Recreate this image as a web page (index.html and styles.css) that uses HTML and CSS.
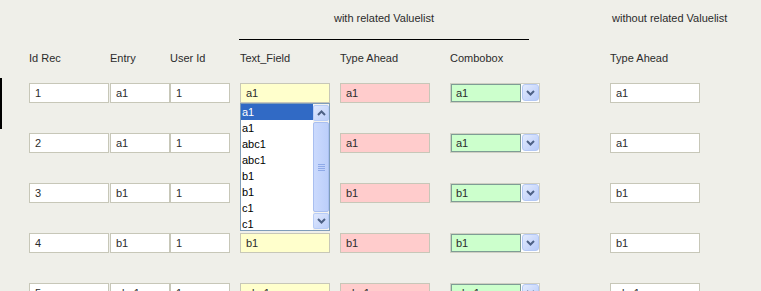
FILE: index.html
```html
<!DOCTYPE html>
<html>
<head>
<meta charset="utf-8">
<link rel="stylesheet" href="styles.css">
</head>
<body>
<div class="page">
  <div class="focus-mark"></div>
  <div class="groups">
    <div class="group group-related">with related Valuelist</div>
    <div class="group group-plain">without related Valuelist</div>
  </div>

  <div class="row labels">
    <div>Id Rec</div>
    <div>Entry</div>
    <div>User Id</div>
    <div>Text_Field</div>
    <div>Type Ahead</div>
    <div>Combobox</div>
    <div>Type Ahead</div>
  </div>

  <div class="row">
    <div class="field w80">1</div>
    <div class="field w60">a1</div>
    <div class="field w60">1</div>
    <div class="cell-rel">
      <div class="field w90 yellow">a1</div>
      <div class="dropdown">
        <div class="items">
          <div class="item selected">a1</div>
          <div class="item">a1</div>
          <div class="item">abc1</div>
          <div class="item">abc1</div>
          <div class="item">b1</div>
          <div class="item">b1</div>
          <div class="item">c1</div>
          <div class="item">c1</div>
        </div>
        <div class="scrollbar">
          <div class="sb-btn"><svg width="9" height="6" viewBox="0 0 9 6"><path d="M1 5 L4.5 1.5 L8 5" fill="none" stroke="#4d6185" stroke-width="2"/></svg></div>
          <div class="sb-track">
            <div class="sb-thumb"><span class="grip"></span><span class="grip"></span><span class="grip"></span><span class="grip"></span></div>
          </div>
          <div class="sb-btn"><svg width="9" height="6" viewBox="0 0 9 6"><path d="M1 1 L4.5 4.5 L8 1" fill="none" stroke="#4d6185" stroke-width="2"/></svg></div>
        </div>
      </div>
    </div>
    <div class="field w90 pink">a1</div>
    <div class="combo"><span class="combo-value">a1</span><span class="combo-btn"><svg width="9" height="6" viewBox="0 0 9 6"><path d="M1 1 L4.5 4.5 L8 1" fill="none" stroke="#4d6185" stroke-width="2"/></svg></span></div>
    <div class="field w90">a1</div>
  </div>

  <div class="row">
    <div class="field w80">2</div>
    <div class="field w60">a1</div>
    <div class="field w60">1</div>
    <div class="field w90 yellow">a1</div>
    <div class="field w90 pink">a1</div>
    <div class="combo"><span class="combo-value">a1</span><span class="combo-btn"><svg width="9" height="6" viewBox="0 0 9 6"><path d="M1 1 L4.5 4.5 L8 1" fill="none" stroke="#4d6185" stroke-width="2"/></svg></span></div>
    <div class="field w90">a1</div>
  </div>

  <div class="row">
    <div class="field w80">3</div>
    <div class="field w60">b1</div>
    <div class="field w60">1</div>
    <div class="field w90 yellow">b1</div>
    <div class="field w90 pink">b1</div>
    <div class="combo"><span class="combo-value">b1</span><span class="combo-btn"><svg width="9" height="6" viewBox="0 0 9 6"><path d="M1 1 L4.5 4.5 L8 1" fill="none" stroke="#4d6185" stroke-width="2"/></svg></span></div>
    <div class="field w90">b1</div>
  </div>

  <div class="row">
    <div class="field w80">4</div>
    <div class="field w60">b1</div>
    <div class="field w60">1</div>
    <div class="field w90 yellow">b1</div>
    <div class="field w90 pink">b1</div>
    <div class="combo"><span class="combo-value">b1</span><span class="combo-btn"><svg width="9" height="6" viewBox="0 0 9 6"><path d="M1 1 L4.5 4.5 L8 1" fill="none" stroke="#4d6185" stroke-width="2"/></svg></span></div>
    <div class="field w90">b1</div>
  </div>

  <div class="row">
    <div class="field w80">5</div>
    <div class="field w60">abc1</div>
    <div class="field w60">1</div>
    <div class="field w90 yellow">abc1</div>
    <div class="field w90 pink">abc1</div>
    <div class="combo"><span class="combo-value">abc1</span><span class="combo-btn"><svg width="9" height="6" viewBox="0 0 9 6"><path d="M1 1 L4.5 4.5 L8 1" fill="none" stroke="#4d6185" stroke-width="2"/></svg></span></div>
    <div class="field w90">abc1</div>
  </div>
</div>
</body>
</html>
```

FILE: styles.css
```css
html, body {
  margin: 0;
  padding: 0;
  background: #efefe9;
  overflow: hidden;
}
.page {
  position: relative;
  font-family: "Liberation Sans", Arial, sans-serif;
  font-size: 11px;
  line-height: 13px;
  color: #2b2b2b;
  width: 761px;
  height: 291px;
  overflow: hidden;
}
.focus-mark {
  position: absolute;
  left: 0;
  top: 78px;
  width: 2px;
  height: 51px;
  background: #000;
}
.groups {
  display: flex;
  padding-left: 239px;
}
.group {
  padding-top: 12px;
  height: 13px;
}
.group-related {
  width: 290px;
  text-align: center;
  padding-bottom: 14px;
  border-bottom: 1px solid #000;
}
.group-plain {
  margin-left: 83px;
}
.row {
  display: grid;
  grid-template-columns: 81px 60px 70px 100px 110px 160px 90px;
  padding-left: 29px;
  height: 20px;
  margin-bottom: 30px;
}
.labels {
  margin-top: 12px;
  height: 13px;
  margin-bottom: 18px;
}
.field {
  box-sizing: border-box;
  height: 20px;
  border: 1px solid #c7c7b8;
  background: #ffffff;
  padding-left: 5px;
  line-height: 18px;
  white-space: nowrap;
  overflow: hidden;
}
.w80 { width: 80px; }
.w60 { width: 60px; }
.w90 { width: 90px; }
.yellow { background: #ffffcc; }
.pink { background: #ffcccc; }
.cell-rel {
  position: relative;
}
.dropdown {
  position: absolute;
  left: 0;
  top: 20px;
  width: 90px;
  height: 128px;
  box-sizing: border-box;
  border: 1px solid #7f9db9;
  background: #ffffff;
  display: flex;
  z-index: 5;
}
.items {
  flex: 1;
  overflow: hidden;
}
.item {
  height: 16px;
  line-height: 16px;
  padding-left: 1px;
  color: #000;
}
.item.selected {
  background: #316ac5;
  color: #ffffff;
}
.scrollbar {
  width: 16px;
  display: flex;
  flex-direction: column;
  background: #f4f3ee;
  padding: 1px 0;
  box-sizing: border-box;
}
.sb-btn {
  height: 16px;
  box-sizing: border-box;
  border: 1px solid #b8cdf7;
  border-radius: 2px;
  background: linear-gradient(135deg, #dfe8fd, #bccffa);
  display: flex;
  align-items: center;
  justify-content: center;
}
.sb-track {
  flex: 1;
  display: flex;
  padding: 1px 0;
}
.sb-thumb {
  flex: 1;
  box-sizing: border-box;
  border: 1px solid #a9bff0;
  border-radius: 2px;
  background: linear-gradient(90deg, #cbdafd, #bccffa);
  display: flex;
  flex-direction: column;
  align-items: center;
  justify-content: center;
  gap: 1px;
}
.grip {
  display: block;
  width: 7px;
  height: 1px;
  background: #8faae8;
}
.combo {
  box-sizing: border-box;
  width: 90px;
  height: 20px;
  border: 1px solid #cfcfc3;
  background: #ffffff;
  display: flex;
}
.combo-value {
  box-sizing: border-box;
  width: 70px;
  height: 18px;
  background: #ccffcc;
  border: 1px solid #7e9c95;
  padding-left: 4px;
  line-height: 16px;
  white-space: nowrap;
  overflow: hidden;
}
.combo-btn {
  box-sizing: border-box;
  width: 17px;
  height: 17px;
  margin: 0 0 0 1px;
  border: 1px solid #b4c8f5;
  border-radius: 3px;
  background: linear-gradient(135deg, #e3ebfe, #b7cbf9);
  display: flex;
  align-items: center;
  justify-content: center;
}
```
